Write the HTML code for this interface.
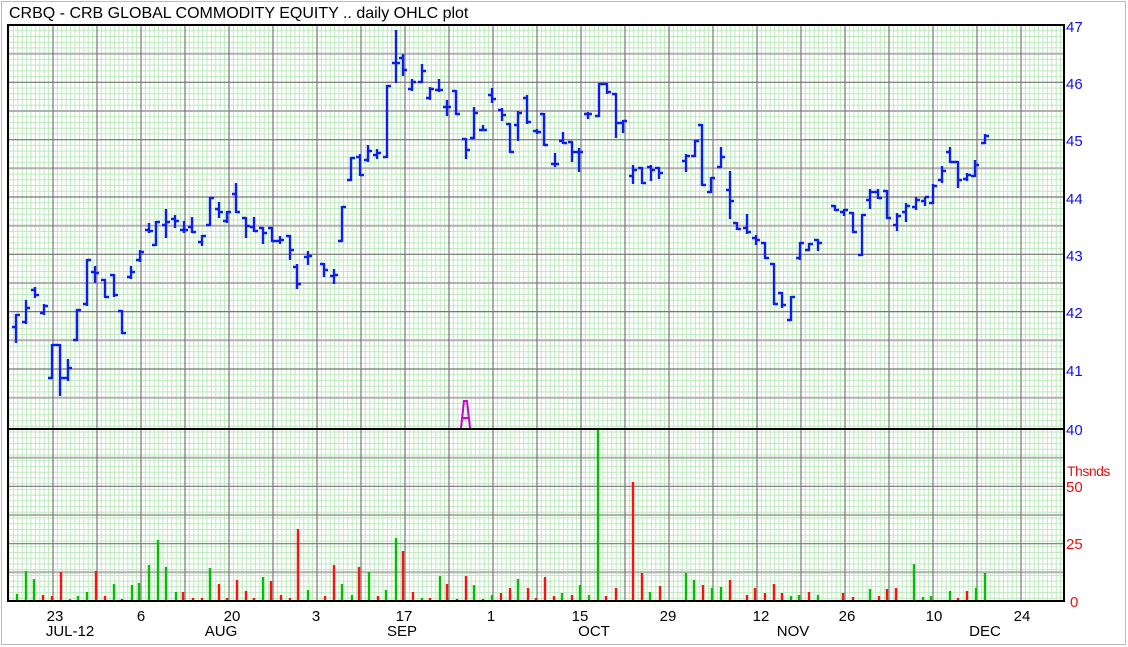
<!DOCTYPE html>
<html><head><meta charset="utf-8">
<style>
html,body{margin:0;padding:0;background:#fff;width:1128px;height:647px;overflow:hidden}
svg{display:block}
text{font-family:"Liberation Sans",sans-serif}
</style></head><body>
<svg id="s" width="1128" height="647" xmlns="http://www.w3.org/2000/svg">
<rect x="1.5" y="1.5" width="1124" height="643" fill="#fff" stroke="#bbb" stroke-width="1"/>
<rect x="7" y="24" width="1058" height="578" fill="#fff"/>
<g id="grid"></g>
<g id="vol"></g>
<g id="bars"></g>
<path d="M461 428 L464 401 L467 401 L470 428 M462 418 H469" stroke="#d000d0" stroke-width="2" fill="none"/>
<rect x="8" y="25" width="1056" height="576" fill="none" stroke="#000" stroke-width="2"/>
<line x1="8" y1="429" x2="1064" y2="429" stroke="#000" stroke-width="2"/>
<text x="9" y="18" font-size="16" fill="#000">CRBQ - CRB GLOBAL COMMODITY EQUITY .. daily OHLC plot</text>
<g font-size="15" fill="#1010ee">
<text x="1066" y="32">47</text><text x="1066" y="89">46</text><text x="1066" y="146">45</text>
<text x="1066" y="204">44</text><text x="1066" y="261">43</text><text x="1066" y="318">42</text>
<text x="1066" y="376">41</text><text x="1066" y="435">40</text></g>
<g font-size="15" fill="#ee1010">
<text x="1067" y="476" font-size="14" letter-spacing="-0.5">Thsnds</text>
<text x="1066" y="492">50</text><text x="1066" y="549">25</text><text x="1070" y="607">0</text></g>
<g font-size="15" fill="#000" text-anchor="middle">
<text x="55" y="621">23</text><text x="141" y="621">6</text><text x="232" y="621">20</text>
<text x="316" y="621">3</text><text x="404" y="621">17</text><text x="491" y="621">1</text>
<text x="580" y="621">15</text><text x="668" y="621">29</text><text x="761" y="621">12</text>
<text x="847" y="621">26</text><text x="934" y="621">10</text><text x="1022" y="621">24</text>
<text x="70" y="636">JUL-12</text><text x="221" y="636">AUG</text><text x="402" y="636">SEP</text>
<text x="594" y="636">OCT</text><text x="793" y="636">NOV</text><text x="985" y="636">DEC</text></g>
</svg>
<script>
var NS="http://www.w3.org/2000/svg";
function P(d,c,w,par){var p=document.createElementNS(NS,"path");p.setAttribute("d",d);p.setAttribute("stroke",c);p.setAttribute("stroke-width",w);p.setAttribute("fill","none");document.getElementById(par).appendChild(p);}
var g="";
for(var x=9;x<1064;x+=4.4)g+="M"+x.toFixed(1)+" 25V601";
for(var y=25;y<601;y+=5.733)g+="M8 "+y.toFixed(1)+"H1064";
P(g,"#bde9bd",1,"grid");
var l="",d="";
for(var k=0;k<7;k++){l+="M8 "+(25+28.67+57.33*k).toFixed(1)+"H1064";}
for(var k=1;k<7;k++){d+="M8 "+(25+57.33*k).toFixed(1)+"H1064";}
l+="M8 457.7H1064M8 515H1064M8 572.3H1064";
d+="M8 486.3H1064M8 543.7H1064";
P(l,"#b0b0b0",2,"grid");
var v="";
for(var x=53;x<1064;x+=44)v+="M"+x+" 25V601";
P(d+v,"#777",1.2,"grid");
var B=[[16,315,342,327,315],[26,301,323,322,308],[35,288,297,290,295],[44,305,314,313,306],[52,345,378,378,345],[60,345,395,345,378],[68,360,380,378,368],[77,310,340,340,310],[87,260,305,304,260],[95,267,282,272,273],[105,280,297,280,297],[114,275,296,275,295],[122,311,333,311,333],[131,267,278,277,272],[140,251,261,260,252],[149,224,232,230,231],[156,222,245,245,222],[166,210,237,225,222],[175,216,227,219,221],[184,222,232,230,230],[192,218,232,227,232],[202,236,245,242,236],[210,198,225,225,198],[219,203,217,209,212],[227,212,222,221,212],[236,184,212,194,212],[246,218,237,218,226],[254,218,231,227,231],[263,228,243,228,233],[272,228,241,228,241],[280,237,243,241,240],[290,236,259,236,250],[297,265,288,267,284],[308,252,264,257,256],[324,264,276,264,270],[334,270,283,276,275],[342,207,241,241,207],[351,158,180,180,158],[360,155,175,157,175],[368,146,161,160,151],[377,150,158,155,153],[387,86,157,157,86],[396,31,82,63,63],[403,55,75,58,70],[412,80,90,89,82],[422,65,82,82,71],[430,88,99,98,89],[439,80,91,90,90],[447,101,115,107,107],[456,91,114,91,114],[466,139,158,139,150],[474,108,138,138,113],[483,126,130,130,130],[492,89,102,95,99],[502,109,120,110,115],[510,124,152,124,152],[518,112,140,125,113],[527,96,123,98,122],[537,130,133,131,132],[544,114,145,114,145],[555,154,166,164,164],[563,133,143,141,143],[572,142,161,142,152],[579,149,171,152,152],[588,113,118,114,114],[599,84,116,116,84],[607,84,93,84,92],[616,94,137,94,123],[623,121,132,123,121],[633,166,183,176,170],[642,168,183,168,183],[651,166,180,167,170],[659,168,178,168,173],[686,155,171,161,156],[695,141,156,156,141],[702,125,185,125,185],[711,178,192,192,178],[721,148,167,167,157],[730,172,218,190,201],[737,223,229,223,229],[747,215,233,228,232],[756,236,244,238,240],[765,243,258,243,258],[774,264,304,264,304],[782,293,307,293,305],[791,297,320,320,297],[800,243,259,258,243],[809,244,250,250,244],[818,240,250,240,243],[835,206,210,206,210],[844,210,215,212,210],[853,213,232,213,232],[862,215,255,255,215],[870,190,208,200,192],[878,190,198,192,198],[887,191,218,191,218],[897,214,230,225,216],[906,204,221,212,206],[916,198,209,207,200],[925,198,205,201,197],[933,185,203,203,186],[942,167,182,180,171],[950,148,162,152,162],[958,162,187,162,180],[967,174,180,179,175],[975,161,176,176,165],[985,135,143,143,136]];
var b="";
B.forEach(function(a){b+="M"+a[0]+" "+(a[1]-1)+"V"+(a[2]+1)+"M"+(a[0]-4)+" "+a[3]+"H"+a[0]+"M"+a[0]+" "+a[4]+"H"+(a[0]+4);});
P(b,"#0a1ef0",2.4,"bars");
var V=[[17,594,1],[26,571,1],[34,579,1],[43,595,0],[52,596,0],[61,572,0],[70,599,1],[78,596,1],[87,592,1],[96,571,0],[105,596,0],[114,584,1],[122,599,0],[132,585,1],[139,583,1],[149,565,1],[158,540,1],[166,567,1],[176,592,1],[183,592,0],[193,598,0],[202,598,0],[210,568,1],[219,584,0],[227,598,0],[237,580,0],[246,591,0],[254,598,0],[263,577,1],[271,581,0],[281,595,0],[290,598,0],[298,529,0],[308,590,1],[325,596,0],[334,565,0],[342,584,1],[352,595,1],[359,567,0],[369,572,1],[378,596,0],[386,590,1],[396,538,1],[403,551,0],[413,592,0],[422,598,1],[430,598,0],[440,576,1],[447,584,0],[457,599,0],[466,576,0],[474,585,1],[483,599,0],[492,595,1],[501,593,0],[510,588,0],[518,579,1],[528,588,0],[536,598,0],[545,577,0],[554,596,0],[562,593,1],[572,595,0],[580,585,1],[589,595,1],[598,430,1],[606,596,0],[616,588,0],[624,600,1],[633,482,0],[642,573,0],[650,592,1],[660,586,0],[686,573,1],[694,580,1],[703,585,0],[712,588,1],[721,587,1],[730,580,0],[738,600,0],[747,595,0],[755,588,0],[765,593,0],[774,584,0],[782,593,0],[791,596,1],[799,595,1],[809,592,0],[818,595,1],[835,600,1],[843,593,0],[853,597,0],[862,600,1],[870,589,1],[879,596,0],[887,589,0],[896,588,0],[906,600,1],[914,564,1],[923,597,1],[931,596,1],[940,600,1],[950,591,1],[958,598,0],[967,591,0],[976,588,1],[985,573,1]];
var gv="",rv="";
V.forEach(function(a){var s="M"+a[0]+" 601V"+a[1];if(a[2])gv+=s;else rv+=s;});
P(gv,"#00c000",2.4,"vol");P(rv,"#ff1010",2.4,"vol");
</script>
</body></html>
